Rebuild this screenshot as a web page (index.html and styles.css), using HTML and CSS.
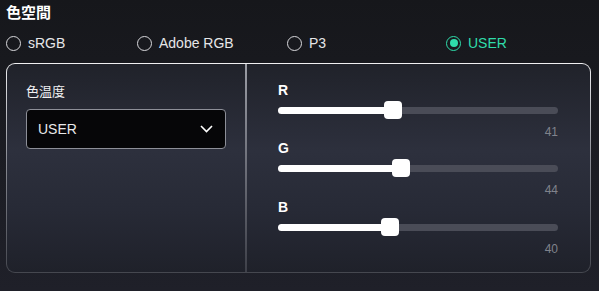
FILE: index.html
```html
<!DOCTYPE html>
<html>
<head>
<meta charset="utf-8">
<title>色空間</title>
<link rel="stylesheet" href="styles.css">
</head>
<body>
<div class="app">
  <h1 class="title">色空間</h1>
  <div class="modes">
    <label class="mode"><span class="radio"></span>sRGB</label>
    <label class="mode"><span class="radio"></span>Adobe RGB</label>
    <label class="mode"><span class="radio"></span>P3</label>
    <label class="mode active"><span class="radio"></span>USER</label>
  </div>
  <div class="panel">
    <div class="left">
      <div class="field-label">色温度</div>
      <div class="select">
        <span>USER</span>
        <svg class="chev" width="13" height="8" viewBox="0 0 13 8"><polyline points="1,1 6.5,6.5 12,1" fill="none" stroke="#fff" stroke-width="1.6"/></svg>
      </div>
    </div>
    <div class="divider"></div>
    <div class="right">
      <div class="channel">
        <div class="ch-label">R</div>
        <div class="slider"><div class="fill" style="width:41%"></div><div class="thumb" style="left:41%"></div></div>
        <div class="ch-value">41</div>
      </div>
      <div class="channel">
        <div class="ch-label">G</div>
        <div class="slider"><div class="fill" style="width:44%"></div><div class="thumb" style="left:44%"></div></div>
        <div class="ch-value">44</div>
      </div>
      <div class="channel">
        <div class="ch-label">B</div>
        <div class="slider"><div class="fill" style="width:40%"></div><div class="thumb" style="left:40%"></div></div>
        <div class="ch-value">40</div>
      </div>
    </div>
  </div>
</div>
</body>
</html>
```

FILE: styles.css
```css
html, body {
  margin:0;
  padding:0;
  height:100%;
}

body {
  font-family:"Liberation Sans", "Noto Sans CJK JP", sans-serif;
  background:linear-gradient(180deg, #16171b 0%, #1c1d24 60%, #1f2029 100%);
  color:#e8e8ea;
}

.app {
  padding:0 8px 0 6px;
}

.title {
  margin:0;
  padding-top:3px;
  font-size:15px;
  line-height:20px;
  font-weight:bold;
  color:#fff;
}

.modes {
  display:grid;
  grid-template-columns:131px 150px 159px auto;
  height:26px;
  margin-top:7px;
  align-items:center;
}

.mode {
  display:flex;
  align-items:center;
  gap:7px;
  font-size:14px;
  color:#e6e6e8;
}

.radio {
  box-sizing:border-box;
  width:15px;
  height:15px;
  border:1.5px solid #d8d8dc;
  border-radius:50%;
  display:flex;
  align-items:center;
  justify-content:center;
}

.mode.active {
  color:#2fdcaa;
}

.mode.active .radio {
  border-color:#2fdcaa;
}

.mode.active .radio::after {
  content:"";
  width:8px;
  height:8px;
  border-radius:50%;
  background:#2fdcaa;
}

.panel {
  margin-top:7px;
  height:210px;
  box-sizing:border-box;
  border:1px solid transparent;
  border-radius:9px;
  background:
    linear-gradient(180deg, #20222a 0%, #2d303d 42%, #272a36 70%, #1f212a 100%) padding-box,
    linear-gradient(180deg, #f0f0f2 0%, #8a8c94 45%, #45474f 100%) border-box;
  display:flex;
}

.left {
  width:238px;
  padding:20px 0 0 19px;
  box-sizing:border-box;
}

.field-label {
  font-size:13px;
  line-height:16px;
  color:#f0f0f2;
}

.select {
  margin-top:9px;
  width:200px;
  height:40px;
  box-sizing:border-box;
  border:1px solid #8d8f98;
  border-radius:4px;
  background:#060608;
  display:flex;
  align-items:center;
  justify-content:space-between;
  padding:0 12px 0 11px;
  font-size:14px;
  color:#e8e8ea;
}

.divider {
  width:2px;
  background:linear-gradient(180deg, #9a9ca4 0%, #6c6e78 50%, #3e4049 100%);
}

.right {
  flex:1;
  padding:18px 32px 0 31px;
}

.channel {
  height:59px;
}

.channel:first-child {
  height:58px;
}

.ch-label {
  font-size:14px;
  line-height:16px;
  font-weight:bold;
  color:#fff;
}

.slider {
  position:relative;
  height:18px;
  margin-top:3px;
  display:flex;
  align-items:center;
}

.slider::before {
  content:"";
  position:absolute;
  left:0;
  right:0;
  top:6px;
  height:7px;
  border-radius:4px;
  background:#4a4c57;
}

.fill {
  position:relative;
  height:7px;
  border-radius:4px;
  background:#fff;
}

.thumb {
  position:absolute;
  top:0;
  width:18px;
  height:18px;
  margin-left:-9px;
  border-radius:4px;
  background:#fff;
}

.ch-value {
  margin-top:6px;
  text-align:right;
  font-size:12px;
  line-height:14px;
  color:#80838c;
}
```
